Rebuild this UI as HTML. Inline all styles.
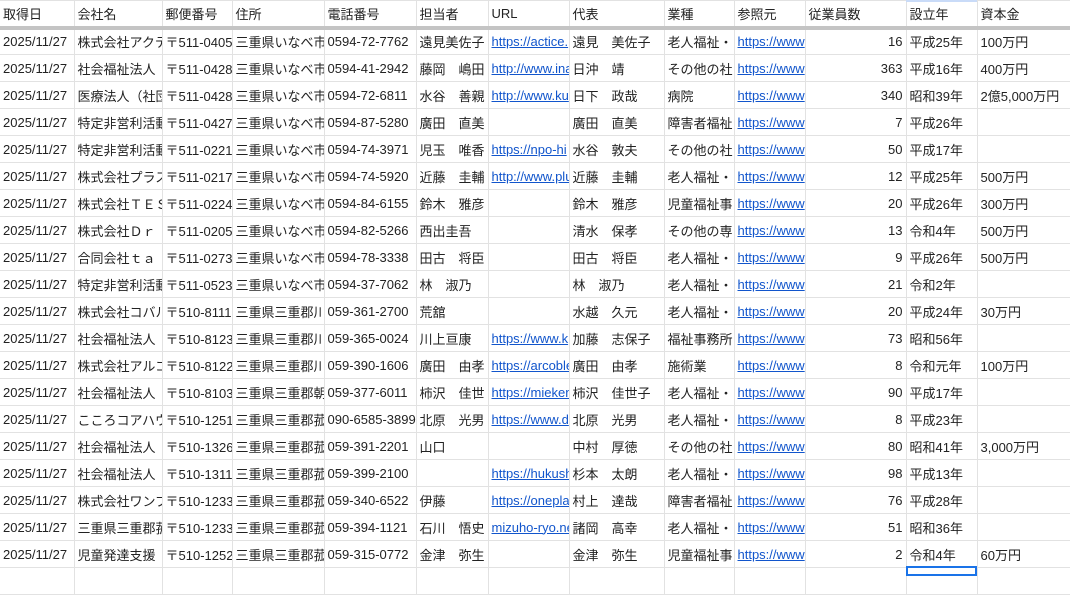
<!DOCTYPE html>
<html><head><meta charset="utf-8">
<style>
html,body{margin:0;padding:0;background:#fff;width:1070px;height:570px;overflow:hidden;}
table{width:1070px;border-collapse:collapse;table-layout:fixed;font-family:"Liberation Sans","Noto Sans CJK JP",sans-serif;font-size:13px;color:#222;position:absolute;left:0;top:0;}
td{border:1px solid #e2e2e2;height:27px;padding:0 3px;white-space:nowrap;overflow:hidden;box-sizing:border-box;}
tr.h td{height:27px;border-bottom:4px solid #c4c4c4;vertical-align:middle;}
td.n{text-align:right;}
a{color:#1155cc;text-decoration:underline;}
td:first-child{border-left:none;}
.sel{position:absolute;left:906px;top:566px;width:71px;height:10px;border:2px solid #1a73e8;box-sizing:border-box;}
.hsel{position:absolute;left:906px;top:0;width:71px;height:2px;background:#c9dbf8;}
</style></head><body>
<table>
<colgroup><col style="width:74px"><col style="width:88px"><col style="width:70px"><col style="width:92px"><col style="width:92px"><col style="width:72px"><col style="width:81px"><col style="width:95px"><col style="width:70px"><col style="width:71px"><col style="width:101px"><col style="width:71px"><col style="width:93px"></colgroup>
<tr class="h"><td>取得日</td><td>会社名</td><td>郵便番号</td><td>住所</td><td>電話番号</td><td>担当者</td><td>URL</td><td>代表</td><td>業種</td><td>参照元</td><td>従業員数</td><td>設立年</td><td>資本金</td></tr>
<tr><td>2025/11/27</td><td>株式会社アクティ</td><td>〒511-0405</td><td>三重県いなべ市</td><td>0594-72-7762</td><td>遠見美佐子</td><td><a>https://actice.</a></td><td>遠見　美佐子</td><td>老人福祉・</td><td><a>https://www</a></td><td class="n">16</td><td>平成25年</td><td>100万円</td></tr>
<tr><td>2025/11/27</td><td>社会福祉法人</td><td>〒511-0428</td><td>三重県いなべ市</td><td>0594-41-2942</td><td>藤岡　嶋田</td><td><a>http://www.ina</a></td><td>日沖　靖</td><td>その他の社</td><td><a>https://www</a></td><td class="n">363</td><td>平成16年</td><td>400万円</td></tr>
<tr><td>2025/11/27</td><td>医療法人（社団</td><td>〒511-0428</td><td>三重県いなべ市</td><td>0594-72-6811</td><td>水谷　善親</td><td><a>http://www.ku</a></td><td>日下　政哉</td><td>病院</td><td><a>https://www</a></td><td class="n">340</td><td>昭和39年</td><td>2億5,000万円</td></tr>
<tr><td>2025/11/27</td><td>特定非営利活動</td><td>〒511-0427</td><td>三重県いなべ市</td><td>0594-87-5280</td><td>廣田　直美</td><td></td><td>廣田　直美</td><td>障害者福祉</td><td><a>https://www</a></td><td class="n">7</td><td>平成26年</td><td></td></tr>
<tr><td>2025/11/27</td><td>特定非営利活動</td><td>〒511-0221</td><td>三重県いなべ市</td><td>0594-74-3971</td><td>児玉　唯香</td><td><a>https://npo-hi</a></td><td>水谷　敦夫</td><td>その他の社</td><td><a>https://www</a></td><td class="n">50</td><td>平成17年</td><td></td></tr>
<tr><td>2025/11/27</td><td>株式会社プラス</td><td>〒511-0217</td><td>三重県いなべ市</td><td>0594-74-5920</td><td>近藤　圭輔</td><td><a>http://www.plu</a></td><td>近藤　圭輔</td><td>老人福祉・</td><td><a>https://www</a></td><td class="n">12</td><td>平成25年</td><td>500万円</td></tr>
<tr><td>2025/11/27</td><td>株式会社ＴＥＳ</td><td>〒511-0224</td><td>三重県いなべ市</td><td>0594-84-6155</td><td>鈴木　雅彦</td><td></td><td>鈴木　雅彦</td><td>児童福祉事</td><td><a>https://www</a></td><td class="n">20</td><td>平成26年</td><td>300万円</td></tr>
<tr><td>2025/11/27</td><td>株式会社Ｄｒ</td><td>〒511-0205</td><td>三重県いなべ市</td><td>0594-82-5266</td><td>西出圭吾</td><td></td><td>清水　保孝</td><td>その他の専</td><td><a>https://www</a></td><td class="n">13</td><td>令和4年</td><td>500万円</td></tr>
<tr><td>2025/11/27</td><td>合同会社ｔａ</td><td>〒511-0273</td><td>三重県いなべ市</td><td>0594-78-3338</td><td>田古　将臣</td><td></td><td>田古　将臣</td><td>老人福祉・</td><td><a>https://www</a></td><td class="n">9</td><td>平成26年</td><td>500万円</td></tr>
<tr><td>2025/11/27</td><td>特定非営利活動</td><td>〒511-0523</td><td>三重県いなべ市</td><td>0594-37-7062</td><td>林　淑乃</td><td></td><td>林　淑乃</td><td>老人福祉・</td><td><a>https://www</a></td><td class="n">21</td><td>令和2年</td><td></td></tr>
<tr><td>2025/11/27</td><td>株式会社コバル</td><td>〒510-8111</td><td>三重県三重郡川</td><td>059-361-2700</td><td>荒舘</td><td></td><td>水越　久元</td><td>老人福祉・</td><td><a>https://www</a></td><td class="n">20</td><td>平成24年</td><td>30万円</td></tr>
<tr><td>2025/11/27</td><td>社会福祉法人</td><td>〒510-8123</td><td>三重県三重郡川</td><td>059-365-0024</td><td>川上亘康</td><td><a>https://www.k</a></td><td>加藤　志保子</td><td>福祉事務所</td><td><a>https://www</a></td><td class="n">73</td><td>昭和56年</td><td></td></tr>
<tr><td>2025/11/27</td><td>株式会社アルコ</td><td>〒510-8122</td><td>三重県三重郡川</td><td>059-390-1606</td><td>廣田　由孝</td><td><a>https://arcoble</a></td><td>廣田　由孝</td><td>施術業</td><td><a>https://www</a></td><td class="n">8</td><td>令和元年</td><td>100万円</td></tr>
<tr><td>2025/11/27</td><td>社会福祉法人</td><td>〒510-8103</td><td>三重県三重郡朝</td><td>059-377-6011</td><td>柿沢　佳世</td><td><a>https://miekenn</a></td><td>柿沢　佳世子</td><td>老人福祉・</td><td><a>https://www</a></td><td class="n">90</td><td>平成17年</td><td></td></tr>
<tr><td>2025/11/27</td><td>こころコアハウ</td><td>〒510-1251</td><td>三重県三重郡菰</td><td>090-6585-3899</td><td>北原　光男</td><td><a>https://www.d</a></td><td>北原　光男</td><td>老人福祉・</td><td><a>https://www</a></td><td class="n">8</td><td>平成23年</td><td></td></tr>
<tr><td>2025/11/27</td><td>社会福祉法人</td><td>〒510-1326</td><td>三重県三重郡菰</td><td>059-391-2201</td><td>山口</td><td></td><td>中村　厚徳</td><td>その他の社</td><td><a>https://www</a></td><td class="n">80</td><td>昭和41年</td><td>3,000万円</td></tr>
<tr><td>2025/11/27</td><td>社会福祉法人</td><td>〒510-1311</td><td>三重県三重郡菰</td><td>059-399-2100</td><td></td><td><a>https://hukush</a></td><td>杉本　太朗</td><td>老人福祉・</td><td><a>https://www</a></td><td class="n">98</td><td>平成13年</td><td></td></tr>
<tr><td>2025/11/27</td><td>株式会社ワンプ</td><td>〒510-1233</td><td>三重県三重郡菰</td><td>059-340-6522</td><td>伊藤</td><td><a>https://onepla</a></td><td>村上　達哉</td><td>障害者福祉</td><td><a>https://www</a></td><td class="n">76</td><td>平成28年</td><td></td></tr>
<tr><td>2025/11/27</td><td>三重県三重郡菰</td><td>〒510-1233</td><td>三重県三重郡菰</td><td>059-394-1121</td><td>石川　悟史</td><td><a>mizuho-ryo.ne</a></td><td>諸岡　高幸</td><td>老人福祉・</td><td><a>https://www</a></td><td class="n">51</td><td>昭和36年</td><td></td></tr>
<tr><td>2025/11/27</td><td>児童発達支援</td><td>〒510-1252</td><td>三重県三重郡菰</td><td>059-315-0772</td><td>金津　弥生</td><td></td><td>金津　弥生</td><td>児童福祉事</td><td><a>https://www</a></td><td class="n">2</td><td>令和4年</td><td>60万円</td></tr>
<tr><td></td><td></td><td></td><td></td><td></td><td></td><td></td><td></td><td></td><td></td><td></td><td></td><td></td></tr>
</table>
<div class="hsel"></div>
<div class="sel"></div>
</body></html>
